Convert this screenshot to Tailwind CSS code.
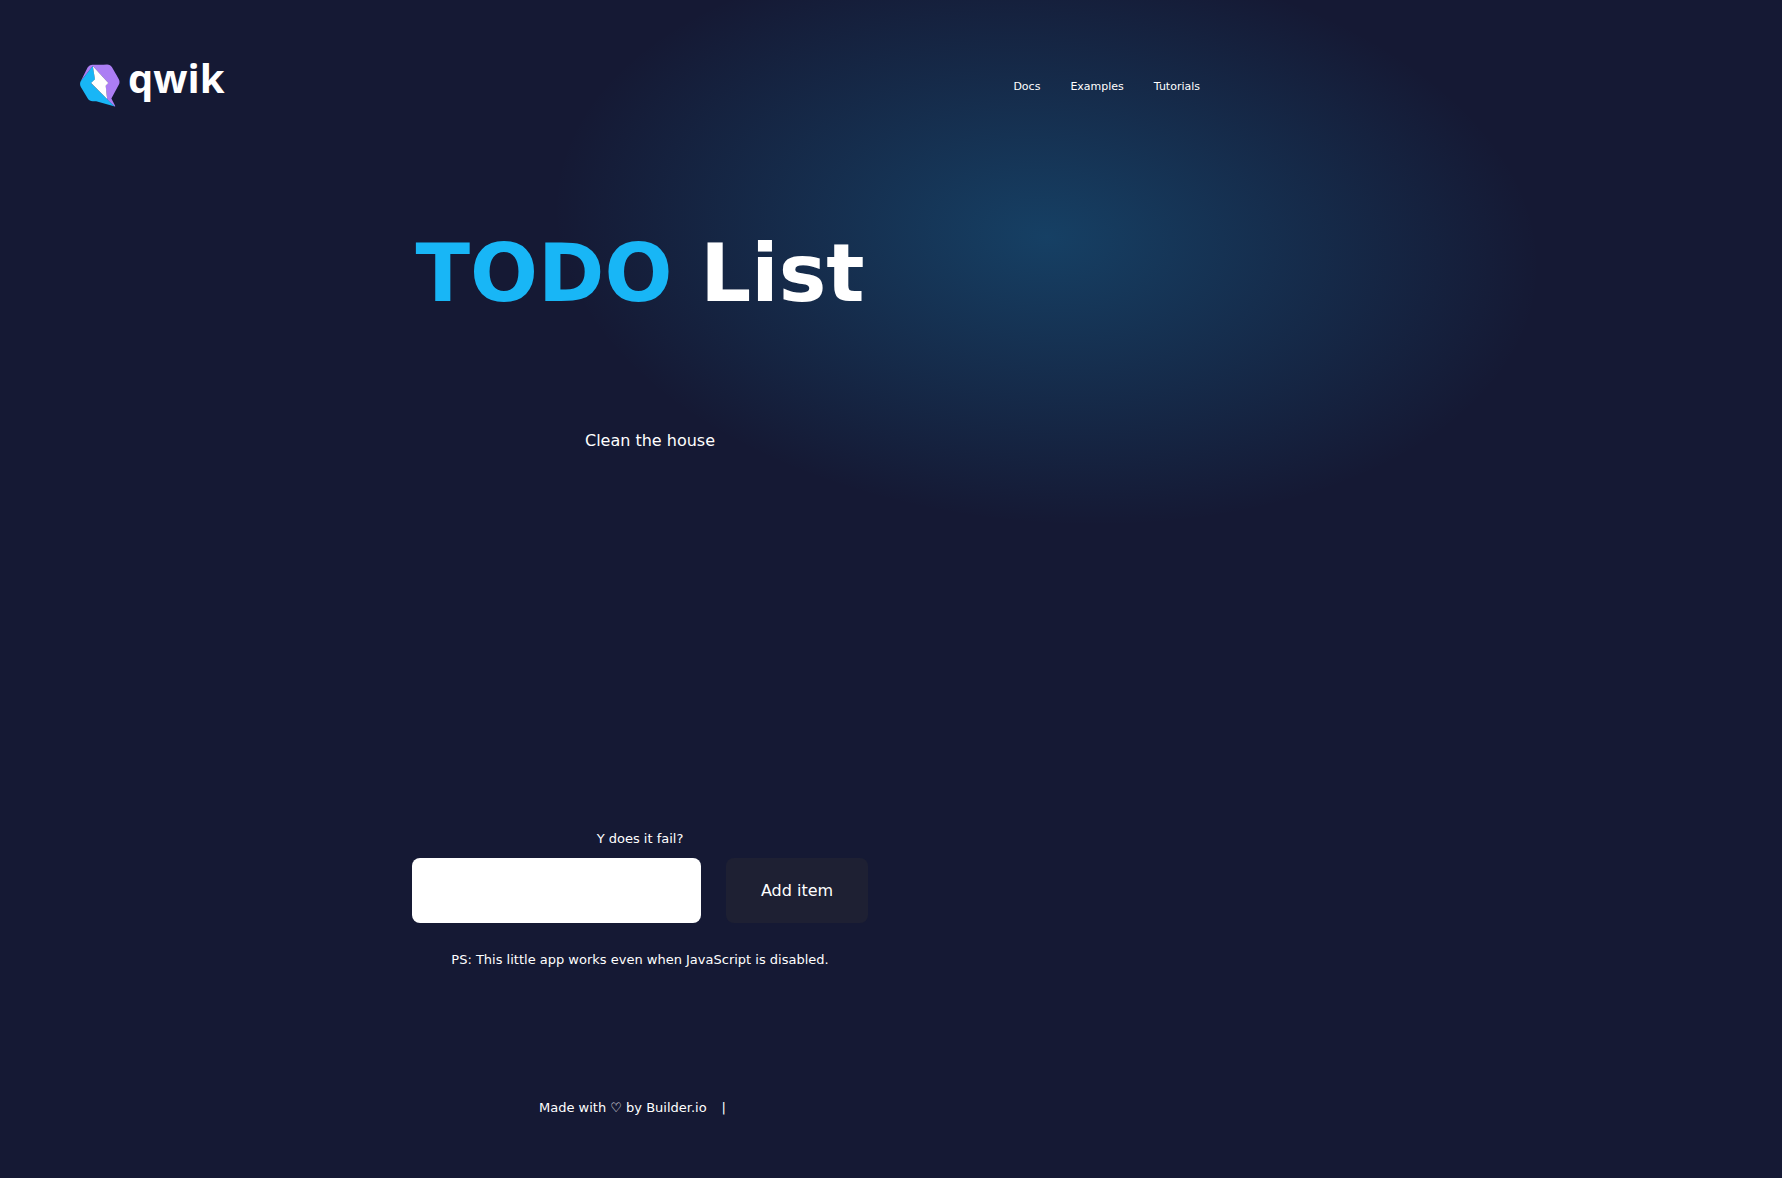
<!DOCTYPE html>
<html lang="en">
<head>
<meta charset="utf-8">
<meta name="viewport" content="width=device-width, initial-scale=1">
<title>Qwik TODO List</title>
<script src="https://cdn.jsdelivr.net/npm/@tailwindcss/browser@4"></script>
</head>
<body class="relative min-h-screen overflow-x-hidden bg-[#151934] font-['DejaVu_Sans',sans-serif] text-white">
<!-- Background glow -->
<div aria-hidden="true" class="absolute inset-0 overflow-hidden">
  <div class="absolute -top-[96px] left-[378px] h-[788px] w-[1360px] rotate-[5deg] bg-[radial-gradient(57.58%_57.58%_at_48.79%_42.42%,rgba(24,180,244,0.5)_0%,rgba(46,55,114,0)_63.22%)] opacity-50"></div>
</div>
<div class="relative w-full max-w-[1280px]">
  <header class="flex items-start justify-between px-20 pt-[62px]">
    <a href="#" aria-label="qwik" class="flex h-[48px] items-start gap-2">
      <svg class="h-[45px] w-10" viewBox="0 0 47 53" fill="none" aria-hidden="true">
        <path fill="#18B6F6" d="M40.973 52.5351L32.0861 43.6985L31.9503 43.7187V43.6222L13.0511 24.9595L17.7083 20.4602L14.9721 4.76321L1.99103 20.8531C-.220593 23.0826 -.628262 26.7329 .962725 29.4284L9.0822 42.8933C10.324 44.955 12.567 46.2092 14.9915 46.184L19.0095 46.1437L40.973 52.5351Z"/>
        <path fill="#AC7EF4" d="M45.8232 20.5411L44.0381 17.2437L43.1065 15.5558L42.7378 14.8959L42.699 14.9362L37.8094 6.46693C36.5874 4.34474 34.3056 3.04013 31.8424 3.06L27.5543 3.18L14.7587 3.22C12.3343 3.23576 10.1137 4.51 8.88809 6.57L1.11743 21.9771L15.0141 4.72291L33.2323 24.7375L29.9933 28.0121L31.9333 43.6981L33.4829 45.2065L40.8284 52.3781C41.1382 52.6773 41.6423 52.3166 41.4389 51.9415L36.9 43.0094L44.8135 28.3865L45.8 26.6C46.7 24.8 46.75 22.3 45.8232 20.5411Z"/>
        <path fill="#fff" d="M33.3076 24.6882L15.0099 4.74291L17.6103 20.359L12.9529 24.8785L31.9045 43.7076L30.2002 28.0817L33.3076 24.6882Z"/>
      </svg>
      <span class="font-['Open_Sans',sans-serif] text-[40px] leading-8 font-bold">qwik</span>
    </a>
    <nav class="pt-[17px]">
      <ul class="flex gap-[30px] text-[11px] leading-4">
        <li><a href="#">Docs</a></li>
        <li><a href="#">Examples</a></li>
        <li><a href="#">Tutorials</a></li>
      </ul>
    </nav>
  </header>
  <main class="flex flex-col items-center">
    <h1 class="pt-[117px] text-[80px] leading-[93px] font-bold"><span class="text-[#18b6f6]">TODO</span> List</h1>
    <ul class="mt-[109px] min-h-[402px] pl-5 text-base leading-6">
      <li>Clean the house</li>
    </ul>
    <form class="flex flex-col items-center" onsubmit="return false">
      <label for="item" class="mb-[11px] text-[13px] leading-4">Y does it fail?</label>
      <div class="flex gap-[25px]">
        <input id="item" type="text" name="text" class="h-[65px] w-[289px] rounded-lg bg-white px-4 text-base text-black">
        <button type="submit" class="h-[65px] w-[142px] rounded-lg bg-[#1e2033] text-base">Add item</button>
      </div>
    </form>
    <p class="mt-7 text-[13px] leading-[18px]">PS: This little app works even when JavaScript is disabled.</p>
  </main>
  <footer class="flex justify-center pt-[130px] pb-[60px] text-[13px] leading-[18px]">
    <a href="#">Made with ♡ by Builder.io</a>
    <span class="px-[15px]">|</span>
  </footer>
</div>
</body>
</html>
